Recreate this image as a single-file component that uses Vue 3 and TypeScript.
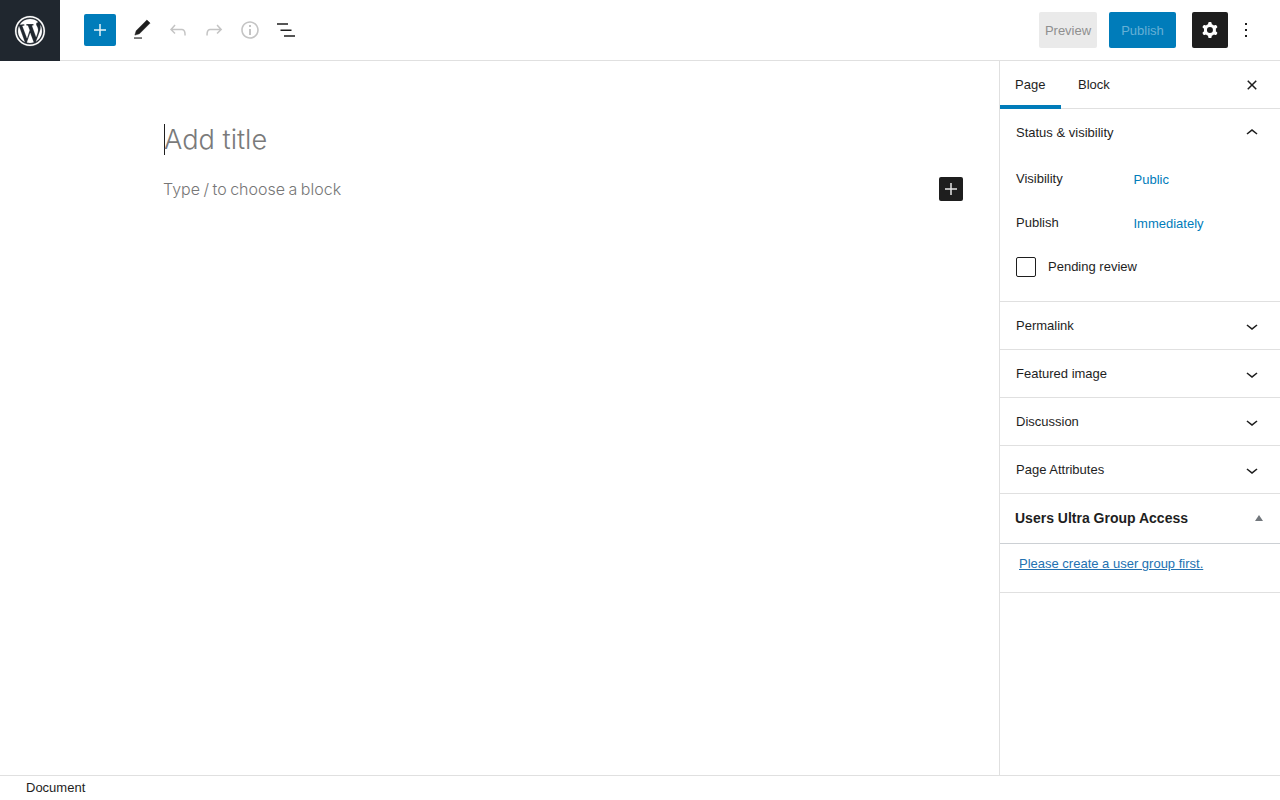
<script setup lang="ts">
const collapsed: string[] = ['Permalink', 'Featured image', 'Discussion', 'Page Attributes']
</script>

<template>
  <div class="page">
    <header class="topbar">
      <div class="logo">
        <svg width="36" height="36" viewBox="-2 -2 24 24" fill="#fff" stroke="#fff" stroke-width=".12"><path d="M20 10c0-5.52-4.48-10-10-10S0 4.48 0 10s4.48 10 10 10 10-4.48 10-10zM10 1.01c4.97 0 8.99 4.02 8.99 8.99s-4.02 8.99-8.99 8.99S1.01 14.97 1.01 10 5.03 1.01 10 1.01zM8.01 14.82L4.96 6.61c.49-.03 1.05-.08 1.05-.08.43-.05.38-1.01-.06-.99 0 0-1.29.1-2.13.1-.15 0-.33 0-.52-.01 1.44-2.17 3.9-3.6 6.7-3.6 2.09 0 3.99.79 5.41 2.09-.79-.14-1.35.55-1.35 1.29 0 .66.38 1.22.79 1.88.31.54.5 1.22.5 2.22 0 1.35-1.27 4.5-1.27 4.5l-2.71-7.5c.48-.03.75-.16.75-.16.43-.05.38-1.1-.05-1.08 0 0-1.3.11-2.14.11-.78 0-2.11-.11-2.11-.11-.43-.02-.48 1.06-.05 1.08l.84.08 1.12 3.04zm6.02 2.15L16.64 10s.67-1.69.39-3.81c.63 1.14.94 2.42.94 3.81 0 2.96-1.56 5.58-3.94 6.97zM2.68 6.77L6.5 17.25c-2.67-1.3-4.47-4.08-4.47-7.25 0-1.16.2-2.23.65-3.23zm7.45 4.53l2.29 6.25c-.75.27-1.57.42-2.42.42-.72 0-1.41-.11-2.06-.3z"/></svg>
      </div>
      <div class="tools">
        <button class="inserter">
          <svg width="24" height="24" viewBox="0 0 24 24" fill="#e6f2f8"><path d="M18 11.25h-5.25V6h-1.5v5.25H6v1.5h5.25V18h1.5v-5.25H18z"/></svg>
        </button>
        <span class="tool">
          <svg width="24" height="24" viewBox="0 0 24 24" fill="#1e1e1e"><path stroke="#1e1e1e" stroke-width=".5" stroke-linejoin="round" d="M20.1 5.1L16.9 2 6.2 12.7l-1.3 4.4 4.5-1.3L20.1 5.1z"/><path fill="#555" d="M4 20.8h8v-1.5H4v1.5z"/></svg>
        </span>
        <span class="tool">
          <svg width="24" height="24" viewBox="0 0 24 24" fill="#c4c4c4"><path d="M18.3 11.7c-.6-.6-1.4-.9-2.3-.9H6.7l2.9-3.3-1.1-1-4.5 5L8.5 16l1-1-2.7-2.7H16c.5 0 .9.2 1.3.5 1 1 1 3.4 1 4.5v.3h1.5v-.2c0-1.5 0-4.3-1.5-5.7z"/></svg>
        </span>
        <span class="tool">
          <svg width="24" height="24" viewBox="0 0 24 24" fill="#c4c4c4"><path d="M15.6 6.5l-1.1 1 2.9 3.3H8c-.9 0-1.7.3-2.3.9-1.4 1.5-1.4 4.2-1.4 5.6v.2h1.5v-.3c0-1.1 0-3.5 1-4.5.3-.3.7-.5 1.3-.5h9.2L14.5 15l1.1 1.1 4.6-4.6-4.6-5z"/></svg>
        </span>
        <span class="tool">
          <svg width="24" height="24" viewBox="0 0 24 24" fill="#c4c4c4"><path d="M12 3.2c-4.8 0-8.8 3.9-8.8 8.8 0 4.8 3.9 8.8 8.8 8.8 4.8 0 8.8-3.9 8.8-8.8 0-4.8-4-8.8-8.8-8.8zm0 16c-4 0-7.2-3.3-7.2-7.2C4.8 8 8 4.8 12 4.8s7.2 3.3 7.2 7.2c0 4-3.2 7.2-7.2 7.2zM11 17h2v-6h-2v6zm0-8h2V7h-2v2z"/></svg>
        </span>
        <span class="tool">
          <svg width="24" height="24" viewBox="0 0 24 24" fill="#1e1e1e"><path d="M3 5.2h11v1.5H3zM6.5 11.4h11v1.5h-11zM10 17.3h11v1.5H10z"/></svg>
        </span>
      </div>
      <div class="actions">
        <button class="preview">Preview</button>
        <button class="publish">Publish</button>
        <button class="settings">
          <svg width="24" height="24" viewBox="0 0 24 24" fill="#fff"><path fill-rule="evenodd" clip-rule="evenodd" d="M10.289 4.836A1 1 0 0111.275 4h1.306a1 1 0 01.987.836l.244 1.466c.787.26 1.503.679 2.108 1.218l1.393-.522a1 1 0 011.216.437l.653 1.13a1 1 0 01-.23 1.273l-1.148.944a6.025 6.025 0 010 2.435l1.149.946a1 1 0 01.23 1.272l-.653 1.13a1 1 0 01-1.216.437l-1.394-.522c-.605.54-1.32.958-2.108 1.218l-.244 1.466a1 1 0 01-.987.836h-1.306a1 1 0 01-.986-.836l-.244-1.466a5.995 5.995 0 01-2.108-1.218l-1.394.522a1 1 0 01-1.217-.436l-.653-1.131a1 1 0 01.23-1.272l1.149-.946a6.026 6.026 0 010-2.435l-1.148-.944a1 1 0 01-.23-1.272l.653-1.131a1 1 0 011.217-.437l1.393.522a5.994 5.994 0 012.108-1.218l.244-1.466zM14.929 12a3 3 0 11-6 0 3 3 0 016 0z"/></svg>
        </button>
        <span class="more">
          <svg width="24" height="24" viewBox="0 0 24 24" fill="#1e1e1e"><path d="M13 19h-2v-2h2v2zm0-6h-2v-2h2v2zm0-6h-2V5h2v2z"/></svg>
        </span>
      </div>
    </header>

    <div class="main">
      <section class="editor">
        <div class="title"><span class="caret"></span>Add title</div>
        <div class="block-row">
          <span class="block-hint">Type / to choose a block</span>
          <button class="block-add">
            <svg width="24" height="24" viewBox="0 0 24 24" fill="#e6e6e6"><path d="M18 11.25h-5.25V6h-1.5v5.25H6v1.5h5.25V18h1.5v-5.25H18z"/></svg>
          </button>
        </div>
      </section>

      <aside class="sidebar">
        <div class="tabs">
          <span class="tab active">Page</span>
          <span class="tab">Block</span>
          <span class="close">
            <svg width="24" height="24" viewBox="0 0 24 24" fill="#1e1e1e"><path d="M12 13.06l3.712 3.713 1.061-1.06L13.061 12l3.712-3.712-1.06-1.06L12 10.938 8.288 7.227l-1.061 1.06L10.939 12l-3.712 3.712 1.06 1.061L12 13.061z"/></svg>
          </span>
        </div>

        <div class="panel open">
          <div class="panel-head">
            <span class="head-label">Status &amp; visibility</span>
            <svg width="24" height="24" viewBox="0 0 24 24" fill="#1e1e1e"><path d="M6.5 12.4L12 8l5.5 4.4-.9 1.2L12 10l-4.5 3.6-1-1.2z"/></svg>
          </div>
          <div class="panel-body">
            <div class="row"><span class="label">Visibility</span><a class="value">Public</a></div>
            <div class="row"><span class="label">Publish</span><a class="value">Immediately</a></div>
            <div class="check-row"><span class="checkbox"></span><span>Pending review</span></div>
          </div>
        </div>

        <div v-for="name in collapsed" :key="name" class="panel">
          <div class="panel-head">
            <span>{{ name }}</span>
            <svg width="24" height="24" viewBox="0 0 24 24" fill="#1e1e1e"><path d="M17.5 11.6L12 16l-5.5-4.4.9-1.2L12 14l4.5-3.6 1 1.2z"/></svg>
          </div>
        </div>

        <div class="metabox">
          <div class="metabox-head">
            <h2>Users Ultra Group Access</h2>
            <span class="arrow"></span>
          </div>
          <div class="metabox-body">
            <a>Please create a user group first.</a>
          </div>
        </div>
      </aside>
    </div>

    <footer class="footer">Document</footer>
  </div>
</template>

<style>
html, body { margin: 0; overflow: hidden; }
</style>

<style scoped>
.page {
  width: 1280px;
  height: 800px;
  display: flex;
  flex-direction: column;
  background: #fff;
  color: #1e1e1e;
  font-family: "Liberation Sans", Arial, sans-serif;
  font-size: 13px;
  overflow: hidden;
}
button { border: 0; padding: 0; font-family: inherit; }

.topbar {
  height: 61px;
  flex: none;
  box-sizing: border-box;
  border-bottom: 1px solid #e0e0e0;
  display: flex;
  align-items: flex-start;
}
.logo {
  width: 60px;
  height: 61px;
  flex: none;
  background: #20272f;
  display: flex;
  align-items: center;
  justify-content: center;
}
.tools {
  display: flex;
  align-items: center;
  height: 60px;
  padding-left: 24px;
  gap: 12px;
}
.inserter {
  width: 32px;
  height: 32px;
  background: #007cba;
  border-radius: 2px;
  display: flex;
  align-items: center;
  justify-content: center;
  margin-right: 2px;
}
.tool { width: 24px; height: 24px; display: block; }
.tool svg, .more svg, .close svg { display: block; }
.actions {
  margin-left: auto;
  height: 60px;
  display: flex;
  align-items: center;
  padding-right: 22px;
}
.preview {
  width: 58px;
  height: 36px;
  background: #eaeaea;
  color: #8f8f8f;
  font-size: 13px;
  border-radius: 2px;
}
.publish {
  width: 67px;
  height: 36px;
  margin-left: 12px;
  background: #007cba;
  color: #66b0d6;
  font-size: 13px;
  border-radius: 2px;
}
.settings {
  width: 36px;
  height: 36px;
  margin-left: 16px;
  background: #1e1e1e;
  border-radius: 2px;
  display: flex;
  align-items: center;
  justify-content: center;
}
.more { width: 24px; height: 24px; margin-left: 6px; }

.main { flex: 1; display: flex; min-height: 0; }
.editor { flex: 1; min-width: 0; }
.title {
  margin: 63px 0 0 164px;
  height: 32px;
  line-height: 32px;
  font-family: Inter, "Noto Sans", sans-serif;
  font-size: 27.2px;
  font-weight: 300;
  color: #7a7a7a;
  display: flex;
  align-items: center;
}
.caret { width: 1px; height: 31px; margin-top: -2px; background: #1e1e1e; margin-right: -1px; flex: none; }
.block-row {
  margin: 21px 36px 0 163px;
  height: 24px;
  display: flex;
  align-items: center;
  justify-content: space-between;
}
.block-hint {
  font-family: Inter, "Noto Sans", sans-serif;
  font-size: 16px;
  font-weight: 300;
  word-spacing: -1px;
  color: #767676;
}
.block-add {
  width: 24px;
  height: 24px;
  background: #1e1e1e;
  border-radius: 2px;
  display: block;
}
.block-add svg { display: block; }

.sidebar {
  width: 281px;
  flex: none;
  box-sizing: border-box;
  border-left: 1px solid #e0e0e0;
}
.tabs {
  height: 48px;
  box-sizing: border-box;
  border-bottom: 1px solid #e0e0e0;
  display: flex;
}
.tab {
  height: 48px;
  box-sizing: border-box;
  padding: 16px 15px 0;
  line-height: 16px;
}
.tab.active { width: 61px; border-bottom: 4px solid #007cba; }
.tab:not(.active) { padding-left: 17px; }
.close { margin-left: auto; margin-right: 16px; margin-top: 12px; width: 24px; height: 24px; }

.panel { border-bottom: 1px solid #e0e0e0; }
.panel-head {
  height: 47px;
  padding: 0 16px;
  display: flex;
  align-items: center;
  justify-content: space-between;
}
.panel.open .panel-head { height: 48px; }
.head-label { margin-bottom: 2px; }
.panel-head svg { flex: none; }
.panel-body { height: 144px; padding: 8px 16px 0; box-sizing: border-box; }
.row { height: 44px; display: flex; }
.label { width: 117.5px; line-height: 16px; padding-top: 6px; }
.value { color: #007cba; line-height: 16px; padding-top: 7px; }
.check-row {
  display: flex;
  align-items: center;
  gap: 12px;
  height: 20px;
  margin-top: 4px;
}
.check-row span:last-child { margin-top: -1px; }
.checkbox {
  width: 20px;
  height: 20px;
  box-sizing: border-box;
  border: 1px solid #1e1e1e;
  border-radius: 2px;
  flex: none;
}

.metabox-head {
  height: 50px;
  box-sizing: border-box;
  border-bottom: 1px solid #ccd0d4;
  padding-left: 15px;
  padding-right: 17px;
  display: flex;
  align-items: center;
  justify-content: space-between;
}
.metabox-head h2 {
  margin: 0;
  font-size: 14px;
  font-weight: 700;
  color: #1e1e1e;
  line-height: 1.4;
}
.arrow {
  width: 0;
  height: 0;
  margin-top: -1px;
  border-left: 4px solid transparent;
  border-right: 4px solid transparent;
  border-bottom: 6px solid #72777c;
}
.metabox-body {
  height: 48px;
  padding: 0 19px;
  border-bottom: 1px solid #e0e0e0;
}
.metabox-body a {
  display: block;
  padding-top: 12px;
  line-height: 16px;
  color: #2271b1;
  text-decoration: underline;
}

.footer {
  height: 25px;
  flex: none;
  box-sizing: border-box;
  border-top: 1px solid #e0e0e0;
  padding-left: 26px;
  line-height: 24px;
}
</style>
